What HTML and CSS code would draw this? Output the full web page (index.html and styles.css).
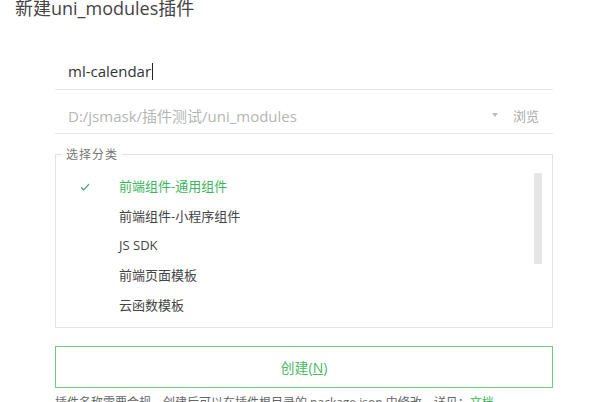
FILE: index.html
```html
<!doctype html>
<html>
  <head>
    <meta charset="utf-8">
    <title>新建uni_modules插件</title>
    <link rel="stylesheet" href="styles.css">
  </head>
  <body>
    <h1 class="title">新建uni_modules插件</h1>

    <div class="form">
      <div class="field">
        <span class="value">ml-calendar</span><span class="caret"></span>
      </div>

      <div class="field field-path">
        <span class="placeholder">D:/jsmask/插件测试/uni_modules</span>
        <span class="arrow"></span>
        <span class="browse">浏览</span>
      </div>

      <fieldset class="group">
        <legend>选择分类</legend>
        <ul class="list">
          <li class="item active">
            <svg class="check" width="10" height="8" viewBox="0 0 10 8"><path d="M1 4.2 L3.8 6.8 L9 1" fill="none" stroke="#4aa77c" stroke-width="1.2"/></svg>
            前端组件-通用组件
          </li>
          <li class="item">前端组件-小程序组件</li>
          <li class="item">JS SDK</li>
          <li class="item">前端页面模板</li>
          <li class="item">云函数模板</li>
        </ul>
        <div class="scrollbar"></div>
      </fieldset>

      <button class="create">创建(<u>N</u>)</button>

      <p class="hint">插件名称需要合规，创建后可以在插件根目录的 package.json 中修改。详见：<a href="#">文档</a></p>
    </div>
  </body>
</html>
```

FILE: styles.css
```css
* {
  box-sizing: border-box;
}

html,
body {
  margin: 0;
  padding: 0;
  background: #fff;
  overflow: hidden;
}
body {
  font-family: "Open Sans", "Noto Sans CJK SC", sans-serif;
  color: #333;
  width: 604px;
  height: 402px;
}
.title {
  margin: 0;
  padding: 1px 0 0 15px;
  font-size: 18px;
  line-height: 15px;
  font-weight: normal;
  color: #444;
}
.form {
  width: 498px;
  margin: 37px 0 0 55px;
}
.field {
  display: flex;
  align-items: center;
  height: 37px;
  padding-left: 13px;
  border-bottom: 1px solid #e6e6e6;
  font-size: 15px;
}
.field-path {
  height: 44px;
  padding-top: 7px;
}
.caret {
  display: inline-block;
  width: 1px;
  height: 17px;
  background: #222;
  margin-left: 1px;
}
.placeholder {
  color: #b5b5b5;
  flex: 1;
}
.arrow {
  width: 0;
  height: 0;
  border-left: 3px solid transparent;
  border-right: 3px solid transparent;
  border-top: 4px solid #bbb;
  margin-right: 15px;
}
.browse {
  font-size: 13px;
  color: #aaa;
  width: 40px;
}
.group {
  position: relative;
  margin: 11px 0 0;
  padding: 0;
  height: 183px;
  border: 1px solid #e3e3e3;
}
.group legend {
  margin-left: 6px;
  padding: 0 4px;
  font-size: 12px;
  letter-spacing: 1px;
  color: #777;
}
.list {
  list-style: none;
  margin: 9px 0 0;
  padding: 0 0 0 63px;
}
.item {
  position: relative;
  height: 29.7px;
  line-height: 29.7px;
  font-size: 13px;
  color: #444;
}
.item.active {
  color: #3cb55c;
}
.check {
  position: absolute;
  left: -39px;
  top: 11px;
}
.scrollbar {
  position: absolute;
  right: 10px;
  top: 10px;
  width: 8px;
  height: 91px;
  background: #e6e6e6;
}
.create {
  display: block;
  width: 100%;
  height: 42px;
  margin-top: 18px;
  background: #fff;
  border: 1px solid #6ccc84;
  color: #4cb866;
  font-family: inherit;
  font-size: 14px;
}
.create u {
  text-decoration-color: #4cb866;
}
.hint {
  margin: 7px 0 0;
  font-size: 12px;
  line-height: 16px;
  color: #666;
  white-space: nowrap;
}
.hint a {
  color: #3cb55c;
  text-decoration: none;
}
```
